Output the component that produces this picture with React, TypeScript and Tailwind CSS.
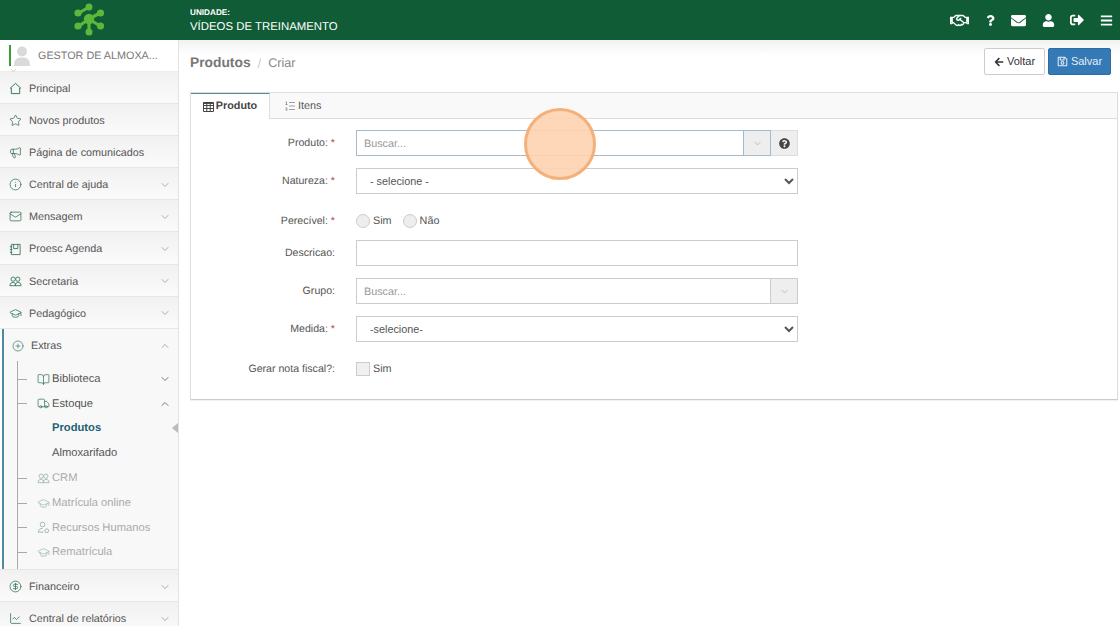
import React from 'react';
import {
  Star, Megaphone, Info, Mail, BookOpen, Truck, GraduationCap, CirclePlus,
  CircleDollarSign, ChartLine, ChevronDown, ChevronUp, ListOrdered,
} from 'lucide-react';
import {
  FaRegHandshake, FaQuestion, FaEnvelope, FaUser, FaSignOutAlt, FaBars, FaArrowLeft, FaRegSave,
  FaQuestionCircle,
} from 'react-icons/fa';

const HouseIcon = ({ size = 13, className = '' }: any) => (
  <svg width={size} height={size} viewBox="0 0 14 14" fill="none" stroke="currentColor" strokeWidth={1} className={className}>
    <path d="M7 1.5 L12.5 6.5 L11.5 6.5 L11.5 12.5 L2.5 12.5 L2.5 6.5 L1.5 6.5 Z" strokeLinejoin="round" />
  </svg>
);

const AgendaIcon = ({ size = 13, className = '' }: any) => (
  <svg width={size} height={size} viewBox="0 0 14 14" fill="none" stroke="currentColor" strokeWidth={0.9} className={className}>
    <path d="M2.5 1.5 H12 V12.5 H2.5 Z M5 1.5 V6 H9.5 V1.5 M1 4 H3.5 M1 7 H3.5 M1 10 H3.5" />
  </svg>
);

const PeopleIcon = ({ size = 13, className = '' }: any) => (
  <svg width={size} height={size} viewBox="0 0 14 14" fill="none" stroke="currentColor" strokeWidth={0.9} className={className}>
    <circle cx="4.5" cy="4.5" r="2.3" />
    <circle cx="9.5" cy="4.5" r="2.3" />
    <path d="M1 11.5 C1 8.5 3 8 4.5 8 C6 8 7 8.8 7 11.5 Z M7 11.5 C7 8.8 8 8 9.5 8 C11 8 13 8.5 13 11.5 Z" />
  </svg>
);

const PersonGearIcon = ({ size = 13, className = '' }: any) => (
  <svg width={size} height={size} viewBox="0 0 14 14" fill="none" stroke="currentColor" strokeWidth={1} className={className}>
    <circle cx="6" cy="3.8" r="2.5" />
    <path d="M1.5 12 C1.5 9 3.5 8 6 8 M1.5 12 H7" />
    <circle cx="10.5" cy="10.5" r="2" />
  </svg>
);

const TableIcon = () => (
  <svg width="11" height="10" viewBox="0 0 11 10" fill="none" stroke="#444" strokeWidth="1">
    <path d="M0.5 0.5 H10.5 V9.5 H0.5 Z M0.5 3.5 H10.5 M0.5 6.5 H10.5 M3.8 1 V9.5 M7.2 1 V9.5" />
    <path d="M0.5 1.2 H10.5" strokeWidth="1.5" />
  </svg>
);

const topMenu = [
  { label: 'Principal', icon: HouseIcon },
  { label: 'Novos produtos', icon: Star },
  { label: 'Página de comunicados', icon: Megaphone },
  { label: 'Central de ajuda', icon: Info, arrow: true },
  { label: 'Mensagem', icon: Mail, arrow: true },
  { label: 'Proesc Agenda', icon: AgendaIcon, arrow: true },
  { label: 'Secretaria', icon: PeopleIcon, arrow: true },
  { label: 'Pedagógico', icon: GraduationCap, arrow: true },
];

const Logo = () => (
  <svg width="34" height="36" viewBox="0 0 34 36" className="block">
    <g stroke="#5cb83a" strokeWidth="3.2" fill="none">
      <path d="M17 5 L7 11 M17 17 L28 11 M17 17 L17 30 M17 17 L7 24 M17 17 L28 24" />
    </g>
    <g fill="#5cb83a">
      <circle cx="17" cy="5" r="3.5" />
      <circle cx="6" cy="11" r="3.6" />
      <circle cx="28.5" cy="11" r="3.6" />
      <circle cx="17" cy="17" r="5.2" />
      <circle cx="6" cy="24" r="3.6" />
      <circle cx="28.5" cy="24" r="3.6" />
      <circle cx="17" cy="30" r="3.5" />
    </g>
  </svg>
);

const MenuRow = ({ label, icon: Icon, arrow }: { label: string; icon: any; arrow?: boolean }) => (
  <div className="h-[32.1px] flex items-center pl-[9px] pr-[7px] pt-[2px] border-b border-[#e6e6e6] bg-gradient-to-b from-[#f1f1f1] to-[#fbfbfb] text-[#555]">
    <Icon size={13} strokeWidth={1.4} className="text-[#2f6f50] shrink-0" />
    <span className="ml-[7px] flex-1 pt-[1px]">{label}</span>
    {arrow && <ChevronDown size={12} strokeWidth={1.2} className="text-[#777]" />}
  </div>
);

const SubRow = ({ label, icon: Icon, arrow, muted }: { label: string; icon: any; arrow?: 'up' | 'down'; muted?: boolean }) => (
  <div className={`h-[24.8px] flex items-center pr-[7px] ${muted ? 'text-[#aaa]' : 'text-[#555]'}`}>
    <span className="w-[9px] h-px bg-[#aaa] shrink-0" />
    <Icon size={13} strokeWidth={1.3} className={`ml-[10px] shrink-0 ${muted ? 'text-[#9cb5a8]' : 'text-[#2f6f50]'}`} />
    <span className="ml-[2px] flex-1 text-[11.2px]">{label}</span>
    {arrow === 'down' && <ChevronDown size={12} strokeWidth={1.6} className="text-[#555]" />}
    {arrow === 'up' && <ChevronUp size={12} strokeWidth={1.6} className="text-[#555]" />}
  </div>
);

const Sidebar = () => (
  <aside className="w-[179px] shrink-0 h-[586px] overflow-hidden border-r border-[#e2e2e2] bg-white text-[10.8px]">
    <div className="relative h-[32px] flex items-center pl-[9px] bg-white border-b border-[#ececec]">
      <span className="w-[2px] h-[21px] bg-[#3f9b3a]" />
      <svg width="18" height="21" viewBox="0 0 18 21" className="ml-[2px]">
        <circle cx="9" cy="6.5" r="5" fill="#dadada" />
        <path d="M1 21 C1 14 4 12.5 9 12.5 C14 12.5 17 14 17 21 Z" fill="#dadada" />
      </svg>
      <span className="ml-[7px] pt-[1px] text-[#777]">GESTOR DE ALMOXA...</span>
      <ChevronDown size={9} strokeWidth={1} className="absolute left-[9px] bottom-[-4px] text-[#888]" />
    </div>
    {topMenu.map((m) => <MenuRow key={m.label} {...m} />)}
    <div className="relative border-l-[2px] ml-[2px] border-[#4f8ba0] bg-[#f8f8f8] h-[240.5px]">
      <div className="h-[32px] flex items-center pl-[8px] pr-[7px] pt-[2px] text-[#555]">
        <CirclePlus size={12} strokeWidth={1.3} className="text-[#2f6f50]" />
        <span className="ml-[7px] flex-1">Extras</span>
        <ChevronUp size={12} strokeWidth={1.2} className="text-[#777]" />
      </div>
      <div className="ml-[13px] border-l border-[#aaa] pt-[6px] h-[208px]">
        <SubRow label="Biblioteca" icon={BookOpen} arrow="down" />
        <SubRow label="Estoque" icon={Truck} arrow="up" />
        <div className="relative h-[24.8px] flex items-center pl-[34px] text-[#1f5f73] font-bold text-[11.2px]">
          Produtos
          <span className="absolute right-0 top-[7px] border-y-[5px] border-y-transparent border-r-[6px] border-r-[#bbb]" />
        </div>
        <div className="h-[24.8px] flex items-center pl-[34px] text-[#555] text-[11.2px]">Almoxarifado</div>
        <SubRow label="CRM" icon={PeopleIcon} muted />
        <SubRow label="Matrícula online" icon={GraduationCap} muted />
        <SubRow label="Recursos Humanos" icon={PersonGearIcon} muted />
        <SubRow label="Rematrícula" icon={GraduationCap} muted />
      </div>
    </div>
    <div className="border-t border-[#e6e6e6]">
      <MenuRow label="Financeiro" icon={CircleDollarSign} arrow />
      <MenuRow label="Central de relatórios" icon={ChartLine} arrow />
    </div>
  </aside>
);

const Label = ({ children, req }: { children: React.ReactNode; req?: boolean }) => (
  <div className="w-[145px] shrink-0 pt-[2px] pr-[1px] text-right text-[10.6px] text-[#555]">
    {children}{req && <span className="text-[#b94a48]"> *</span>}
  </div>
);

const Radio = ({ label }: { label: string }) => (
  <span className="flex items-center mr-[11px]">
    <span className="w-[14px] h-[14px] rounded-full border border-[#ccc] bg-[#eee]" />
    <span className="ml-[3px] text-[#555]">{label}</span>
  </span>
);

const App = () => (
  <div className="relative w-[1120px] h-[626px] overflow-hidden bg-white font-['Liberation_Sans',Arial,sans-serif] [text-rendering:geometricPrecision]">
    <header className="h-10 flex items-center bg-[#0f5c36] text-white">
      <div className="w-[179px] shrink-0 flex justify-center pr-[1px]"><Logo /></div>
      <div className="ml-[11px] pt-[2px]">
        <div className="text-[8.2px] font-bold leading-[11px]">UNIDADE:</div>
        <div className="text-[11.4px] leading-[17px] mt-[1px]">VÍDEOS DE TREINAMENTO</div>
      </div>
      <div className="ml-auto flex items-center pr-[7px]">
        <FaRegHandshake size={19} className="mr-[16px]" />
        <FaQuestion size={11} className="mr-[15px]" />
        <FaEnvelope size={15} className="mr-[16px]" />
        <FaUser size={13} className="mr-[15px]" />
        <FaSignOutAlt size={14} className="mr-[16px]" />
        <FaBars size={13} />
      </div>
    </header>
    <div className="flex">
      <Sidebar />
      <main className="flex-1 text-[10.8px]">
        <div className="h-[52px] flex items-center pl-[11px] pr-[9px] pb-[9px] bg-gradient-to-b from-[#f2f2f2] to-white to-[30%]">
          <div className="flex items-center pt-[4px]">
            <span className="text-[13.8px] font-bold text-[#777]">Produtos</span>
            <span className="ml-[7px] text-[#ccc] text-[13px]">/</span>
            <span className="ml-[7px] text-[12.6px] text-[#888]">Criar</span>
          </div>
          <div className="ml-auto flex gap-[3px]">
            <button className="h-[27px] w-[61px] flex items-center justify-center gap-[3px] rounded-[2px] border border-[#ccc] bg-white text-[#333] text-[11px]">
              <FaArrowLeft size={10} /> Voltar
            </button>
            <button className="h-[27px] w-[63px] flex items-center justify-center gap-[3px] rounded-[2px] border border-[#2e6da4] bg-[#337ab7] text-[#e6eef5] text-[11px]">
              <FaRegSave size={11} /> Salvar
            </button>
          </div>
        </div>
        <section className="ml-[11px] mr-[2px] h-[308px] border border-[#ddd] border-b-[#ccc] shadow-[0_1px_1px_rgba(0,0,0,0.05)]">
          <div className="h-[26px] flex bg-[#f9f9f9] border-b border-[#ddd]">
            <div className="w-[79px] h-[26px] flex items-center justify-center gap-[2px] bg-white border-t-[1px] border-t-[#4f8ba0] border-r border-r-[#ddd] font-bold text-[#444]">
              <TableIcon /> Produto
            </div>
            <div className="ml-[14px] pt-[1px] flex items-center gap-[2px] text-[#555]">
              <ListOrdered size={12} strokeWidth={1.1} /> Itens
            </div>
          </div>
          <div className="flex flex-col pt-[11px]">
            <div className="flex items-center h-[26px]">
              <Label req>Produto:</Label>
              <div className="ml-[20px] w-[442px] h-[26px] flex">
                <div className="flex-1 flex items-center pl-[7px] pt-[2px] border border-[#a3bccd] text-[#999]">Buscar...</div>
                <div className="w-[27px] flex items-center justify-center bg-[#eee] border-y border-r border-[#a3bccd]">
                  <ChevronDown size={11} strokeWidth={1} className="text-[#888]" />
                </div>
                <div className="w-[27px] flex items-center justify-center bg-[#eee] border-y border-r border-[#ddd]">
                  <FaQuestionCircle size={11} className="text-[#444]" />
                </div>
              </div>
            </div>
            <div className="flex items-center h-[26px] mt-[12px]">
              <Label req>Natureza:</Label>
              <select className="ml-[20px] w-[442px] h-[26px] pl-[9px] border border-[#ccc] bg-white text-[#555] text-[10.8px]" defaultValue="">
                <option value="">- selecione -</option>
              </select>
            </div>
            <div className="flex items-center h-[14px] mt-[20px]">
              <Label req>Perecível:</Label>
              <div className="ml-[20px] flex"><Radio label="Sim" /><Radio label="Não" /></div>
            </div>
            <div className="flex items-center h-[26px] mt-[12px]">
              <Label>Descricao:</Label>
              <div className="ml-[20px] w-[442px] h-[26px] border border-[#ccc]" />
            </div>
            <div className="flex items-center h-[26px] mt-[12px]">
              <Label>Grupo:</Label>
              <div className="ml-[20px] w-[442px] h-[26px] flex border border-[#ccc]">
                <div className="flex-1 flex items-center pl-[7px] pt-[2px] text-[#999]">Buscar...</div>
                <div className="w-[27px] flex items-center justify-center bg-[#eee] border-l border-[#ccc]">
                  <ChevronDown size={11} strokeWidth={1} className="text-[#888]" />
                </div>
              </div>
            </div>
            <div className="flex items-center h-[26px] mt-[12px]">
              <Label req>Medida:</Label>
              <select className="ml-[20px] w-[442px] h-[26px] pl-[9px] border border-[#ccc] bg-white text-[#555] text-[10.8px]" defaultValue="">
                <option value="">-selecione-</option>
              </select>
            </div>
            <div className="flex items-center h-[14px] mt-[20px]">
              <Label>Gerar nota fiscal?:</Label>
              <div className="ml-[20px] flex items-center">
                <span className="w-[14px] h-[14px] border border-[#ccc] bg-[#f0f0f0]" />
                <span className="ml-[3px] text-[#555]">Sim</span>
              </div>
            </div>
          </div>
        </section>
      </main>
    </div>
    <div className="absolute left-[524px] top-[108px] w-[72px] h-[72px] rounded-full border-[3px] border-[#f5b07a] bg-[#fdd3b0]/90" />
  </div>
);

export default App;
